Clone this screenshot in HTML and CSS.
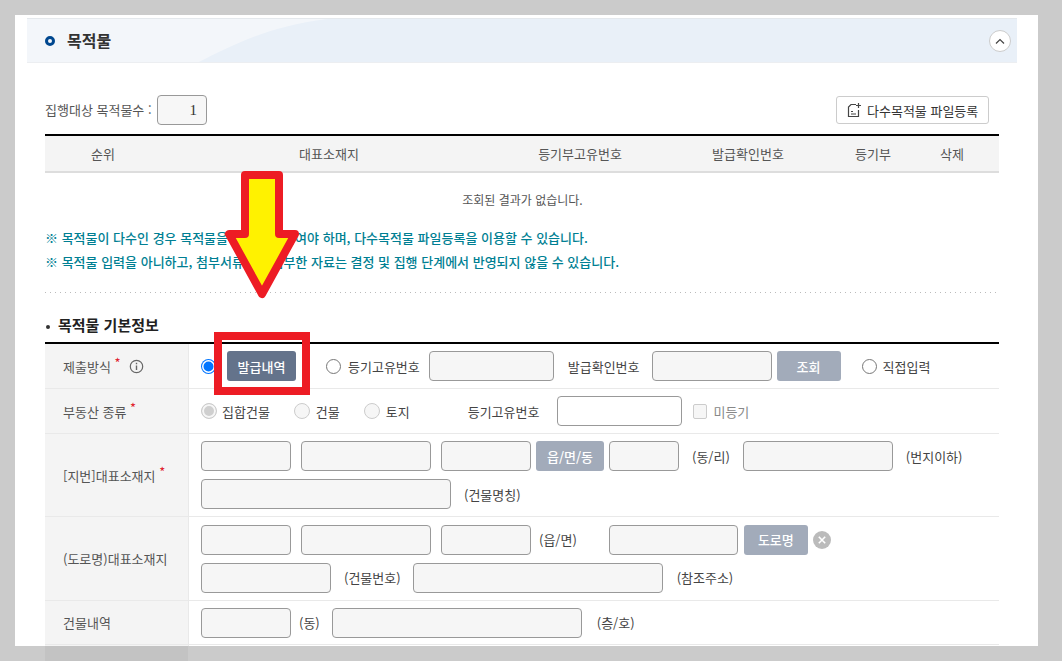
FILE: index.html
```html
<!DOCTYPE html>
<html lang="ko">
<head>
<meta charset="utf-8">
<title>목적물</title>
<link rel="stylesheet" href="styles.css">
</head>
<body>
<main class="sheet">
  <header class="bar">
    <svg class="bar-bg" viewBox="0 0 990 44" preserveAspectRatio="none" aria-hidden="true"><path d="M172 44C205 27 240 8 300 0H990V44Z" fill="#e9f0f8"/></svg>
    <span class="ring"></span>
    <h1 class="bar-title">목적물</h1>
    <button class="fold" type="button" aria-label="접기"><svg width="12" height="8" viewBox="0 0 12 8"><path d="M2 6.5 6 2.5 10 6.5" fill="none" stroke="#444" stroke-width="1.2"/></svg></button>
  </header>
  <div class="content">
    <div class="count-row">
      <span class="count-label">집행대상 목적물수 :</span>
      <span class="count-box">1</span>
      <button class="file-btn" type="button">
        <svg width="16" height="16" viewBox="0 0 16 16" aria-hidden="true"><path d="M10 2.5H5L2.5 5V14.5H12.5V8" fill="none" stroke="#444" stroke-width="1.2"/><path d="M5 9.5H7M5 12H10" stroke="#444" stroke-width="1.2"/><path d="M12.5 1V6M10 3.5H15" stroke="#444" stroke-width="1.2"/></svg>
        다수목적물 파일등록
      </button>
    </div>
    <div class="thead">
      <span>순위</span><span>대표소재지</span><span>등기부고유번호</span><span>발급확인번호</span><span>등기부</span><span>삭제</span>
    </div>
    <p class="empty">조회된 결과가 없습니다.</p>
    <p class="note note-first">※ 목적물이 다수인 경우 목적물을 모두 입력하여야 하며, 다수목적물 파일등록을 이용할 수 있습니다.</p>
    <p class="note">※ 목적물 입력을 아니하고, 첨부서류에만 첨부한 자료는 결정 및 집행 단계에서 반영되지 않을 수 있습니다.</p>
    <div class="dots"></div>
    <h2 class="sub-title">목적물 기본정보</h2>

    <div class="form">
      <div class="row r45">
        <div class="th">제출방식 <em>*</em>
          <svg class="info" width="15" height="15" viewBox="0 0 15 15" aria-hidden="true"><circle cx="7.5" cy="7.5" r="6.2" fill="none" stroke="#666" stroke-width="1.2"/><path d="M7.5 6.5V11M7.5 3.8V5.2" stroke="#666" stroke-width="1.4"/></svg>
        </div>
        <div class="td">
          <div class="line">
            <span class="radio on"></span>
            <button class="btn dark w69 ml12" type="button">발급내역</button>
            <span class="radio ml30"></span>
            <span class="txt ml7">등기고유번호</span>
            <span class="inp w125 ml9"></span>
            <span class="txt ml14">발급확인번호</span>
            <span class="inp w120 ml12"></span>
            <button class="btn w64 ml5" type="button">조회</button>
            <span class="radio ml21"></span>
            <span class="txt ml6">직접입력</span>
          </div>
        </div>
      </div>
      <div class="row r45">
        <div class="th">부동산 종류 <em>*</em></div>
        <div class="td">
          <div class="line">
            <span class="radio off sel"></span><span class="txt ml5">집합건물</span>
            <span class="radio off ml24"></span><span class="txt ml6">건물</span>
            <span class="radio off ml24"></span><span class="txt ml6">토지</span>
            <span class="txt ml58">등기고유번호</span>
            <span class="inp white w125 ml18"></span>
            <span class="check ml11"></span><span class="txt mute ml6">미등기</span>
          </div>
        </div>
      </div>
      <div class="row r83">
        <div class="th">[지번]대표소재지 <em>*</em></div>
        <div class="td">
          <div class="line">
            <span class="inp w90"></span><span class="inp w130 ml10"></span><span class="inp w90 ml10"></span>
            <button class="btn w68 ml5" type="button">읍/면/동</button>
            <span class="inp w70 ml5"></span>
            <span class="txt ml13">(동/리)</span>
            <span class="inp w150 ml13"></span>
            <span class="txt ml13">(번지이하)</span>
          </div>
          <div class="line">
            <span class="inp w250"></span><span class="txt ml13">(건물명칭)</span>
          </div>
        </div>
      </div>
      <div class="row r84">
        <div class="th">(도로명)대표소재지</div>
        <div class="td">
          <div class="line">
            <span class="inp w90"></span><span class="inp w130 ml10"></span><span class="inp w90 ml10"></span>
            <span class="txt ml8">(읍/면)</span>
            <span class="inp w129 ml32"></span>
            <button class="btn w64 ml6" type="button">도로명</button>
            <svg class="clear" width="18" height="18" viewBox="0 0 18 18" aria-hidden="true"><circle cx="9" cy="9" r="9" fill="#bbb"/><path d="M5.8 5.8 12.2 12.2M12.2 5.8 5.8 12.2" stroke="#fff" stroke-width="1.6"/></svg>
          </div>
          <div class="line">
            <span class="inp w130"></span><span class="txt ml13">(건물번호)</span>
            <span class="inp w250 ml12"></span><span class="txt ml14">(참조주소)</span>
          </div>
        </div>
      </div>
      <div class="row r44">
        <div class="th">건물내역</div>
        <div class="td">
          <div class="line">
            <span class="inp w90"></span><span class="txt ml8">(동)</span>
            <span class="inp w250 ml12"></span><span class="txt ml15">(층/호)</span>
          </div>
        </div>
      </div>
      <div class="row last"><div class="th"></div><div class="td"></div></div>
    </div>
  </div>
</main>
<div class="strip"></div>
<svg class="marks" width="1062" height="661" viewBox="0 0 1062 661" aria-hidden="true">
  <path d="M245 175H279V234H295L262 294 229 234H245Z" fill="#fff200" stroke="#ed1c24" stroke-width="8" stroke-linejoin="round"/>
  <rect x="218" y="336" width="88" height="55" fill="none" stroke="#ed1c24" stroke-width="8"/>
</svg>
</body>
</html>
```
FILE: styles.css
```css
* { box-sizing: border-box; }
html, body { margin: 0; height: 661px; overflow: hidden; }
body {
  position: relative;
  background: #cbcbcb;
  font-family: "Noto Sans CJK KR", "Noto Sans", sans-serif;
  font-size: 13px;
  color: #555;
  padding: 15px 0 0 15px;
}
p, h1, h2 { margin: 0; }
button { font-family: inherit; padding: 0; }

.sheet { width: 1023px; height: 631px; background: #fff; padding-top: 3px; overflow: hidden; }

.bar {
  position: relative;
  display: flex;
  align-items: center;
  width: 990px;
  height: 45px;
  margin-left: 12px;
  padding: 0 6px 0 18px;
  background: #f3f6fa;
  border-top: 1px solid #e4e8ec;
  border-bottom: 1px solid #eceef1;
}
.bar-bg { position: absolute; left: 0; top: 0; width: 100%; height: 100%; }
.ring { position: relative; width: 10px; height: 10px; border: 3px solid #00478f; border-radius: 50%; }
.bar-title { position: relative; margin: -2px 0 0 12px; font-size: 16px; font-weight: 700; color: #333; line-height: 1; }
.fold {
  position: relative;
  display: flex; align-items: center; justify-content: center;
  width: 22px; height: 22px; margin-left: auto;
  background: #fff; border: 1px solid #ccc; border-radius: 50%;
}

.content { width: 954px; margin-left: 30px; }

.count-row { display: flex; align-items: center; height: 30px; margin-top: 32px; }
.count-label { width: 112px; padding-bottom: 2px; }
.count-box {
  width: 50px; height: 30px; padding-right: 9px;
  text-align: right; line-height: 28px;
  font-family: "Liberation Serif", serif; font-size: 15px; color: #333;
  background: #f7f7f7; border: 1px solid #999; border-radius: 4px;
}
.file-btn {
  display: flex; align-items: center; gap: 5px;
  width: 153px; height: 28px; margin-left: auto; margin-right: 10px; padding-left: 9px;
  background: #fff; border: 1px solid #ccc; border-radius: 3px;
  font-size: 13px; color: #333;
}

.thead {
  display: grid;
  grid-template-columns: 116px 336px 166px 170px 80px 78px;
  align-items: center;
  height: 39px;
  margin-top: 9px;
  text-align: center;
  background: #f4f4f4;
  border-top: 2px solid #000;
  border-bottom: 2px solid #ddd;
}

.empty { height: 17px; margin-top: 18px; padding-left: 1px; text-align: center; font-size: 12px; line-height: 17px; }
.note { height: 24px; font-weight: 500; line-height: 24px; color: #007f93; white-space: nowrap; }
.note-first { margin-top: 18px; }
.dots {
  height: 1px; margin-top: 18px;
  background: repeating-linear-gradient(90deg, #bbb 0 1px, transparent 1px 5px);
}

.sub-title {
  position: relative;
  height: 22px; margin-top: 21px; padding-left: 13px;
  font-size: 15px; font-weight: 700; line-height: 22px; color: #222;
}
.sub-title::before {
  content: ""; position: absolute; left: 1px; top: 11px;
  width: 4px; height: 4px; border-radius: 50%; background: #333;
}

.form { margin-top: 6px; border-top: 2px solid #000; }
.row { display: flex; border-bottom: 1px solid #e9e9e9; }
.r44 { height: 44px; }
.r45 { height: 45px; }
.r83 { height: 83px; }
.r84 { height: 84px; }
.last { height: 20px; border-bottom: 0; }
.th {
  display: flex; align-items: center;
  width: 144px; padding-left: 18px;
  background: #f4f4f4; border-right: 1px solid #e9e9e9;
  white-space: pre;
}
.th em { align-self: center; margin: -7px 0 0 0; font-style: normal; color: #e0232e; font-size: 13px; }
.info { margin-left: 8px; }
.td { display: flex; flex-direction: column; justify-content: center; gap: 8px; padding-left: 12px; flex: 1; }
.line { display: flex; align-items: center; height: 30px; white-space: nowrap; }
.txt { color: #444; }
.mute { color: #888; }

.inp { height: 30px; flex: none; background: #f6f6f6; border: 1px solid #999; border-radius: 4px; }
.white { background: #fff; }
.btn {
  height: 30px; flex: none;
  background: #a2abba; color: #fff; border: 0; border-radius: 3px;
  font-size: 13px; font-weight: 500;
}
.dark { background: #64738b; }
.radio { flex: none; width: 15px; height: 15px; border: 1px solid #777; border-radius: 50%; background: #fff; }
.radio.on { background: #0075ff; border: 0; box-shadow: inset 0 0 0 1.5px #fff, 0 0 0 1px #0075ff; width: 13px; height: 13px; margin-left: 1px; }
.radio.off { background: #f6f6f6; border-color: #ccc; width: 16px; height: 16px; }
.radio.sel { background: #cfcfcf; box-shadow: inset 0 0 0 2px #f6f6f6; }
.check { flex: none; width: 14px; height: 15px; background: #f6f6f6; border: 1px solid #ccc; border-radius: 2px; }
.clear { flex: none; margin-left: 5px; }

.w64 { width: 64px; } .w68 { width: 68px; } .w69 { width: 69px; } .w70 { width: 70px; }
.w90 { width: 90px; } .w120 { width: 120px; } .w125 { width: 125px; } .w129 { width: 129px; }
.w130 { width: 130px; } .w150 { width: 150px; } .w250 { width: 250px; }
.ml5 { margin-left: 5px; } .ml6 { margin-left: 6px; } .ml7 { margin-left: 7px; } .ml8 { margin-left: 8px; } .ml9 { margin-left: 9px; }
.ml10 { margin-left: 10px; } .ml11 { margin-left: 11px; } .ml12 { margin-left: 12px; } .ml13 { margin-left: 13px; }
.ml14 { margin-left: 14px; } .ml15 { margin-left: 15px; } .ml18 { margin-left: 18px; } .ml21 { margin-left: 21px; }
.ml24 { margin-left: 24px; } .ml30 { margin-left: 30px; } .ml32 { margin-left: 32px; } .ml58 { margin-left: 58px; }

.strip { width: 143px; height: 15px; margin-left: 30px; background: #c3c3c3; }
.marks { position: absolute; left: 0; top: 0; pointer-events: none; }
```
